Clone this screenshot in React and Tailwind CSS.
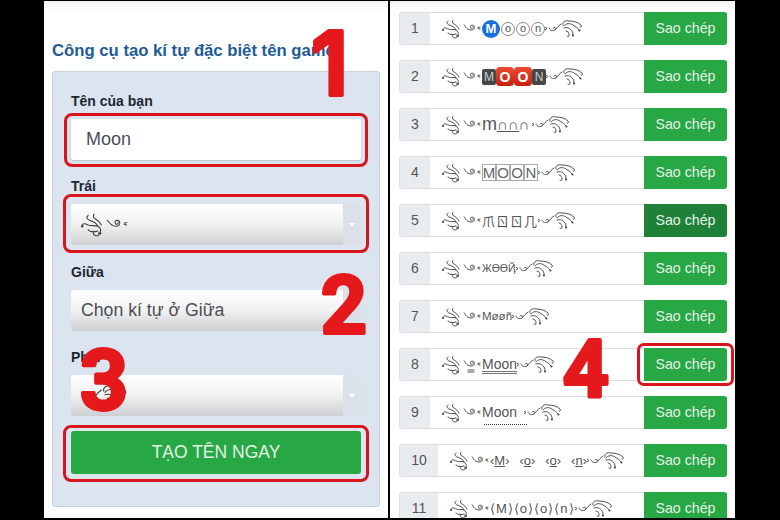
import React from 'react'

const FlourishLeft = ({ mark, big }) => (
  <svg width={big ? 48 : 40} height={big ? 24 : 20} viewBox="0 0 40 20" fill="none" stroke="#3d3d3d" strokeWidth="0.9" strokeLinecap="round" className="shrink-0">
    <path d="M1 10c1-2 3-1 5 0 3 1 6 0 8 1 2 1 3 3 2 5" />
    <path d="M6 2c-2 1-1 3 1 4 3 1 6 2 7 5" />
    <path d="M11 1c-1 1-1 3 1 4s4 3 5 5" />
    <path d="M6 14c2 2 5 2 8 1" />
    <path d="M10 15c0 2 1 4 3 4s2-1 2-3" />
    <circle cx="1" cy="11" r="1" fill="#3d3d3d" stroke="none" />
    <circle cx="16" cy="17" r="1" fill="#3d3d3d" stroke="none" />
    <path d="M22 6c2 3 4 5 7 5 3 0 4-2 3-4-2-2-5 0-3 2 1 1 2 0 2-1" />
    <path d="M36 8.500l2-.5M36 9.500l2 .5" />
    {mark && <path d="M26 15h6M26 17h6" />}
  </svg>
)

const FlourishRight = ({ big }) => (
  <svg width={big ? 48 : 38} height={big ? 24 : 20} viewBox="0 0 38 20" fill="none" stroke="#3d3d3d" strokeWidth="0.9" strokeLinecap="round" className="shrink-0">
    <path d="M0 8l2 1.500-2 1.500" />
    <path d="M4 9c1 3 4 3 6 2 2-1 0-4-2-2M10 11c2-2 4-5 6-6" />
    <path d="M18 6c-1-3 2-5 6-4 4 0 9 1 12 4 1 1 0 3-1 2" />
    <path d="M19 7c2-3 6-3 9-1s5 3 6 5" />
    <path d="M19 9c3-1 6 0 8 3 1 1 1 3 1 4" />
    <path d="M21 12c2 0 3 2 3 4s-1 2-2 1" />
    <circle cx="28" cy="16.500" r="1" fill="#3d3d3d" stroke="none" />
    <circle cx="34.500" cy="11.500" r="1" fill="#3d3d3d" stroke="none" />
  </svg>
)

const Circle = ({ children }) => (
  <span className="flex h-[14px] w-[14px] items-center justify-center rounded-full border border-[#888] text-[11px] leading-none text-[#555]">{children}</span>
)

const Dark = ({ children }) => (
  <span className="flex h-4 w-[14px] items-center justify-center rounded-[2px] bg-[#474747] text-[12px] leading-none text-[#ccc]">{children}</span>
)

const RedKey = ({ children }) => (
  <span className="flex h-[19px] w-[18px] items-center justify-center rounded-[4px] bg-gradient-to-b from-[#ea4a33] to-[#c4200f] text-[14px] font-bold leading-none text-white">{children}</span>
)

const Boxed = ({ children }) => (
  <span className="flex h-[17px] w-[14px] items-center justify-center border border-[#aaa] text-[15px] leading-none text-[#666]">{children}</span>
)

const rows = [
  {
    name: (
      <span className="flex items-center gap-[1px]">
        <span className="flex h-[18px] w-[18px] items-center justify-center rounded-full bg-[#1a6fd8] text-[13px] font-bold leading-none text-white">M</span>
        <Circle>o</Circle>
        <Circle>o</Circle>
        <Circle>n</Circle>
      </span>
    ),
  },
  {
    name: (
      <span className="flex items-center">
        <Dark>M</Dark>
        <RedKey>O</RedKey>
        <RedKey>O</RedKey>
        <Dark>N</Dark>
      </span>
    ),
  },
  {
    name: (
      <span className="flex w-[50px] items-center text-[15px] leading-none text-[#555]">
        <span className="text-[18px] leading-[15px]">m</span>
        <span className="border-b border-[#555] leading-[13px]">∩</span>
        <span className="border-b border-[#555] leading-[13px]">∩</span>
        <span className="leading-[13px]">∩</span>
      </span>
    ),
  },
  {
    name: (
      <span className="flex items-center">
        <Boxed>M</Boxed>
        <Boxed>O</Boxed>
        <Boxed>O</Boxed>
        <Boxed>N</Boxed>
      </span>
    ),
  },
  { name: <span className="font-['Noto_Sans_CJK_SC',sans-serif] text-[13px] tracking-[1px] text-[#555]">爪ㄖㄖ几</span> },
  { name: <span className="text-[10.5px] text-[#555]">ЖӨӨҊ</span> },
  { name: <span className="text-[11.5px] text-[#555]">Møøñ</span> },
  { name: <span className="text-[14px] text-[#555] underline decoration-double decoration-[#777] underline-offset-2">Moon</span>, mark: true },
  {
    name: (
      <span className="relative pr-[7px] text-[14px] text-[#555]">
        Moon
        <span className="absolute bottom-[-2px] left-[2px] right-[-3px] border-b border-dotted border-[#333]" />
      </span>
    ),
  },
  {
    wide: true,
    name: (
      <span className="flex w-[97px] justify-between text-[13px] text-[#555]">
        <span>‹<span className="underline">M</span>›</span>
        <span>‹<span className="underline">o</span>›</span>
        <span>‹<span className="underline">o</span>›</span>
        <span>‹<span className="underline">n</span>›</span>
      </span>
    ),
  },
  { wide: true, name: <span className="text-[13px] tracking-[1px] text-[#555]">⟨M⟩⟨o⟩⟨o⟩⟨n⟩</span> },
]

const Row = ({ index, name, wide, mark, active, circled }) => (
  <div className="flex h-[33px] shrink-0 items-stretch rounded-[3px] border border-[#dcdde0]">
    <div className={`flex shrink-0 items-center justify-center bg-[#e9ecef] text-[14px] text-[#555] ${wide ? 'w-[38px]' : 'w-[30px]'}`}>
      {index}
    </div>
    <div className="flex min-w-0 flex-1 items-center bg-white pl-[12px]">
      <FlourishLeft mark={mark} />
      {name}
      <FlourishRight />
    </div>
    <div className="relative my-[-1px] mr-[-1px] w-[83px] shrink-0">
      <button className={`h-full w-full rounded-r-[3px] pt-[1px] text-[14.2px] text-[#e4f3e7] ${active ? 'bg-[#1f8038]' : 'bg-[#28a745]'}`}>
        Sao chép
      </button>
      {circled && <span className="absolute inset-x-[-7px] inset-y-[-5px] rounded-[7px] border-[3px] border-[#d8141c]" />}
    </div>
  </div>
)

const Outlined = ({ children, inset }) => (
  <div className="relative">
    {children}
    <span className={`absolute rounded-[8px] border-[3px] border-[#d8141c] ${inset}`} />
  </div>
)

const Select = ({ children }) => (
  <div className="flex h-[41px] rounded-[3px] bg-gradient-to-b from-white via-[#f1f1f1] to-[#cdcfd2]">
    <div className="flex flex-1 items-center pl-[10px] text-[17.7px] text-[#4a4f55]">{children}</div>
    <div className="flex w-[18px] items-center justify-center rounded-r-[3px] bg-[#dbe0e9]">
      <span className="h-0 w-0 border-x-[3px] border-t-[4px] border-x-transparent border-t-white" />
    </div>
  </div>
)

const Label = ({ children }) => (
  <p className="text-[14px] font-bold leading-[18px] text-[#1d2733]">{children}</p>
)

// red hand-drawn style numbers laid over the screenshot
const Digit = ({ children, className, size, family }) => (
  <svg width="70" height="90" className={`absolute overflow-visible ${family} ${className}`}>
    <text x="5" y="80" fontSize={size} fontWeight="600" fill="#e5191c" stroke="#e5191c" strokeWidth="4" strokeLinejoin="round">
      {children}
    </text>
  </svg>
)

export default function App() {
  return (
    <div className="relative flex h-[520px] w-[780px] items-stretch gap-[2px] overflow-hidden bg-black pb-[2px] pl-[44px] pt-[1px] font-['Liberation_Sans',sans-serif]">
      {/* left form */}
      <div className="w-[344px] shrink-0 bg-gradient-to-b from-[#f2f2f2] from-0% to-white to-[2%] px-2 pt-[40px]">
        <h2 className="whitespace-nowrap text-[16.7px] font-bold leading-5 text-[#1e5b97]">Công cụ tạo kí tự đặc biệt tên game</h2>
        <div className="mt-[10px] h-[436px] w-[328px] rounded-[3px] border border-[#c6d1de] bg-[#dbe4ef] px-[18px] pt-[20px]">
          <Label>Tên của bạn</Label>
          <div className="mt-[9px]">
            <Outlined inset="inset-x-[-7px] top-[-6px] bottom-[-7px]">
              <div className="flex h-[41px] items-center rounded-[3px] bg-white pl-[15px] text-[18px] text-[#4a4f55] shadow-[0_1px_2px_#b9c2d0]">Moon</div>
            </Outlined>
          </div>
          <div className="mt-[17px]"><Label>Trái</Label></div>
          <div className="mt-[9px]">
            <Outlined inset="inset-x-[-8px] top-[-10px] bottom-[-8px]">
              <Select><FlourishLeft big /></Select>
            </Outlined>
          </div>
          <div className="mt-[18px]"><Label>Giữa</Label></div>
          <div className="mt-[9px]"><Select>Chọn kí tự ở Giữa</Select></div>
          <div className="mt-[17px]"><Label>Phải</Label></div>
          <div className="mt-[9px]"><Select><FlourishRight big /></Select></div>
          <div className="mt-[15px]">
            <Outlined inset="inset-x-[-8px] top-[-6px] bottom-[-8px]">
              <button className="h-[43px] w-full rounded-[3px] bg-[#28a745] text-[17.5px] text-[#e4f3e7]">TẠO TÊN NGAY</button>
            </Outlined>
          </div>
        </div>
      </div>

      {/* right list */}
      <div className="w-[345px] shrink-0 overflow-hidden bg-gradient-to-b from-[#f2f2f2] from-0% to-white to-[2%] pl-[9px] pr-[8px] pt-[11px]">
        <div className="flex flex-col gap-[15px]">
          {rows.map((row, i) => (
            <Row key={i} index={i + 1} {...row} active={i === 4} circled={i === 7} />
          ))}
        </div>
      </div>

      <Digit size={88} family="font-['Inter',sans-serif]" className="left-[306px] top-[15px]">1</Digit>
      <Digit size={80} family="font-['Roboto',sans-serif]" className="left-[316px] top-[253px]">2</Digit>
      <Digit size={84} family="font-['Roboto',sans-serif]" className="left-[75px] top-[329px]">3</Digit>
      <Digit size={80} family="font-['Roboto',sans-serif]" className="left-[558px] top-[317px]">4</Digit>
    </div>
  )
}
